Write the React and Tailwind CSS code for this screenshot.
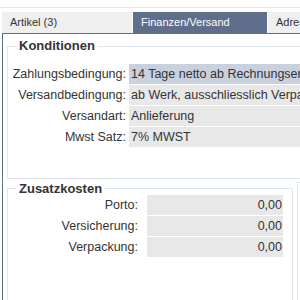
import React from 'react';

const konditionen = [
  { label: 'Zahlungsbedingung:', value: '14 Tage netto ab Rechnungserhalt', active: true },
  { label: 'Versandbedingung:', value: 'ab Werk, ausschliesslich Verpackung' },
  { label: 'Versandart:', value: 'Anlieferung' },
  { label: 'Mwst Satz:', value: '7% MWST' },
];

const zusatzkosten = [
  { label: 'Porto:', value: '0,00' },
  { label: 'Versicherung:', value: '0,00' },
  { label: 'Verpackung:', value: '0,00' },
];

const tabs = [
  { name: 'Artikel (3)', width: 'w-[130px]' },
  { name: 'Finanzen/Versand', width: 'w-[134px]', active: true },
  { name: 'Adressen', width: 'w-[80px]' },
];

const App = () => {
  return (
    <div className="w-[300px] h-[300px] overflow-hidden bg-white font-['Liberation_Sans',Arial,sans-serif] text-[#333]">
      <div className="mt-[7px] border-t border-[#e6e6e6]" />

      {/* tab bar */}
      <div className="mt-[4px] flex gap-px pl-[2px] h-[21px]">
        {tabs.map((tab) => (
          <div
            key={tab.name}
            className={`${tab.width} shrink-0 flex items-center px-[8px] text-[11px] ${
              tab.active ? 'bg-[#5f6e8a] text-white' : 'bg-[#efefef] text-[#333]'
            }`}
          >
            {tab.name}
          </div>
        ))}
      </div>

      {/* panel */}
      <div className="ml-[2px] h-[300px] border-l border-t border-[#5f6e8a] pl-[4px] pt-[5px]">
        <fieldset className="w-[420px] border border-[#dfe5ec] pb-[31px]">
          <legend className="ml-[8px] px-[3px] text-[13px] font-bold leading-[14px]">Konditionen</legend>
          <div className="pt-[11px] flex flex-col gap-px">
            {konditionen.map((row) => (
              <div key={row.label} className="flex h-[20px] items-center text-[12.5px]">
                <div className="w-[118px] shrink-0 text-right">{row.label}</div>
                <div
                  className={`ml-[3px] h-full flex-1 flex items-center pl-[2px] whitespace-nowrap ${
                    row.active ? 'bg-[#c9d1df]' : 'bg-[#e8e8e8]'
                  }`}
                >
                  {row.value}
                </div>
              </div>
            ))}
          </div>
        </fieldset>

        <div className="mt-[3px] flex gap-[4px]">
          <fieldset className="w-[286px] shrink-0 h-[140px] border border-[#dfe5ec]">
            <legend className="ml-[8px] px-[3px] text-[13px] font-bold leading-[13px]">Zusatzkosten</legend>
            <div className="flex flex-col gap-px">
              {zusatzkosten.map((row) => (
                <div key={row.label} className="flex h-[20px] items-center text-[12.5px]">
                  <div className="w-[130px] shrink-0 text-right">{row.label}</div>
                  <div className="ml-[9px] w-[136px] h-full flex items-center justify-end pr-[1px] bg-[#e8e8e8]">
                    {row.value}
                  </div>
                </div>
              ))}
            </div>
          </fieldset>
          <fieldset className="w-[200px] shrink-0 h-[140px] border border-[#dfe5ec]" />
        </div>
      </div>
    </div>
  );
};

export default App;
